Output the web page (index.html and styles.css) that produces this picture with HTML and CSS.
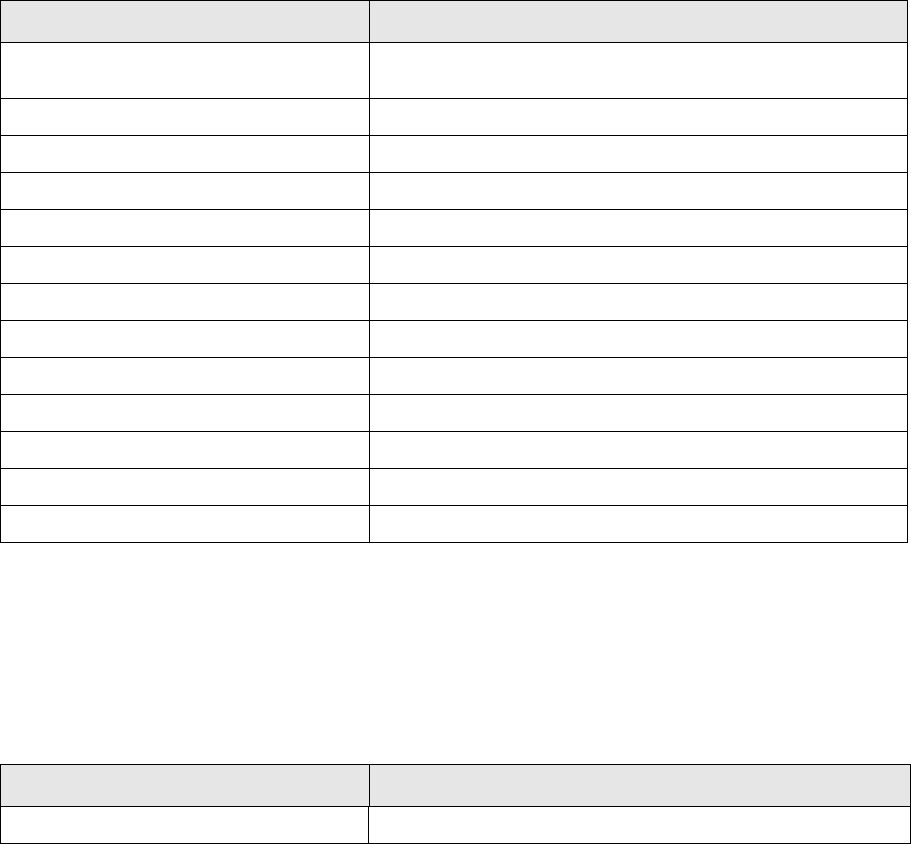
FILE: index.html
```html
<!DOCTYPE html>
<html lang="en">
<head>
<meta charset="utf-8">
<title>Tables</title>
<link rel="stylesheet" href="styles.css">
</head>
<body>
<table class="grid grid-main">
  <colgroup><col class="col-a"><col class="col-b"></colgroup>
  <thead>
    <tr class="row-head"><th></th><th></th></tr>
  </thead>
  <tbody>
    <tr class="row-tall"><td></td><td></td></tr>
    <tr class="row"><td></td><td></td></tr>
    <tr class="row"><td></td><td></td></tr>
    <tr class="row"><td></td><td></td></tr>
    <tr class="row"><td></td><td></td></tr>
    <tr class="row"><td></td><td></td></tr>
    <tr class="row"><td></td><td></td></tr>
    <tr class="row"><td></td><td></td></tr>
    <tr class="row"><td></td><td></td></tr>
    <tr class="row"><td></td><td></td></tr>
    <tr class="row"><td></td><td></td></tr>
    <tr class="row"><td></td><td></td></tr>
    <tr class="row"><td></td><td></td></tr>
  </tbody>
</table>

<div class="second">
  <table class="grid grid-wide">
    <colgroup><col class="col-a"><col class="col-b"></colgroup>
    <thead>
      <tr class="row-head"><th></th><th></th></tr>
    </thead>
  </table>
  <table class="grid grid-wide grid-body">
    <colgroup><col class="col-a2"><col class="col-b"></colgroup>
    <tbody>
      <tr class="row"><td></td><td></td></tr>
    </tbody>
  </table>
</div>
</body>
</html>
```

FILE: styles.css
```css
html, body {
  margin: 0;
  padding: 0;
  background: #ffffff;
  font-family: "Liberation Sans", Arial, sans-serif;
}

.grid {
  border-collapse: collapse;
  table-layout: fixed;
}

.grid th,
.grid td {
  border: 1px solid #000;
  padding: 0;
}

.grid th {
  background: #e6e6e6;
}

.grid-main {
  width: 908px;
}

.grid-wide {
  width: 911px;
}

.col-a { width: 369px; }
.col-a2 { width: 368px; }

.row-head { height: 42px; }
.row-tall { height: 56px; }
.row { height: 37px; }

.second {
  margin-top: 221px;
}

.grid-body {
  margin-top: -1px;
}
```
